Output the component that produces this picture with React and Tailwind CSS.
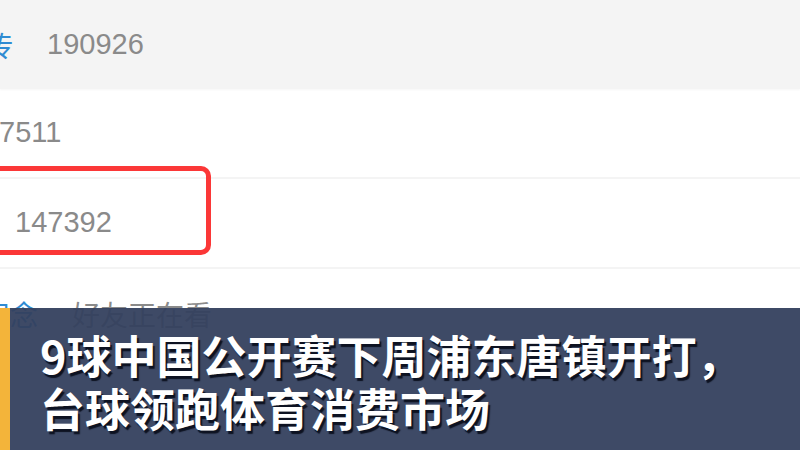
import React from 'react';

// Stats list with a highlighted row and a news caption bar laid over it
export default function App() {
  return (
    <div
      className="relative w-[800px] h-[450px] overflow-hidden bg-white"
      style={{ fontFamily: '"Liberation Sans", "Noto Sans CJK SC", sans-serif' }}
    >
      {/* Header row */}
      <div className="flex items-center h-[89px] bg-[#f4f4f4] shadow-[0_1px_2px_rgba(0,0,0,0.04)]">
        <span className="-ml-[15px] text-[28px] text-[#2f8bd2] font-['Noto_Sans_CJK_SC',sans-serif]">传</span>
        <span className="ml-[34px] text-[29px] text-[#8a8a8a]">190926</span>
      </div>

      {/* Plain rows */}
      <div className="flex items-center h-[90px] border-b-2 border-[#f4f4f4]">
        <span className="-ml-[1px] text-[29px] text-[#8a8a8a]">7511</span>
      </div>
      <div className="flex items-center h-[90px] border-b-2 border-[#f4f4f4]">
        <span className="ml-[15px] text-[29px] text-[#8a8a8a]">147392</span>
      </div>

      {/* Last visible row */}
      <div className="flex items-center h-[90px] font-['Noto_Sans_CJK_SC',sans-serif] text-[28px]">
        <span className="-ml-[18px] text-[#2f8bd2]">纪念</span>
        <span className="ml-[34px] text-[#8a8a8a]">好友正在看</span>
      </div>

      {/* Red highlight box */}
      <div className="absolute left-[-20px] top-[166px] w-[231px] h-[89px] border-[5px] border-[#fb3737] rounded-[10px]" />

      {/* Caption bar */}
      <div className="absolute left-0 right-0 bottom-0 h-[142px] flex bg-[#34405e]/95">
        <div className="w-[10px] bg-[#f3b43a]" />
        <div className="pl-[30px] pt-[20px] text-white font-bold text-[45px] leading-[53px] font-['Noto_Sans_CJK_SC',sans-serif] [text-shadow:2px_3px_1px_rgba(8,12,25,0.9)]">
          <div>9球中国公开赛下周浦东唐镇开打，</div>
          <div>台球领跑体育消费市场</div>
        </div>
      </div>
    </div>
  );
}
